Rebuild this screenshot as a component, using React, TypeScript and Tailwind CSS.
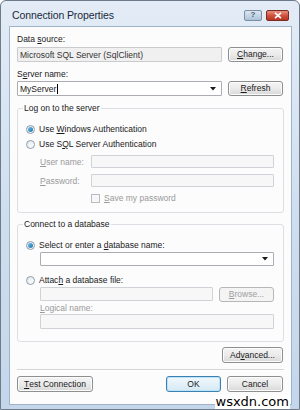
import React from "react";

function U({ children }: { children: React.ReactNode }) {
  return <span className="underline underline-offset-[1px]">{children}</span>;
}

function Btn({
  children,
  className = "",
  focused = false,
  disabled = false,
}: {
  children: React.ReactNode;
  className?: string;
  focused?: boolean;
  disabled?: boolean;
}) {
  const border = focused
    ? "border-[#3c7fb1] shadow-[inset_0_0_0_1px_#b9e4f8] bg-gradient-to-b from-[#f2f8fc] to-[#d6e9f5]"
    : disabled
    ? "border-[#b7b7b7] bg-[#f4f4f4] text-[#a0a0a0]"
    : "border-[#8e8f8f] shadow-[inset_0_0_0_1px_#fcfcfc] bg-gradient-to-b from-[#f4f4f4] via-[#ebebeb] to-[#d8d8d8]";
  return (
    <div
      className={`flex items-center justify-center rounded-[3px] border text-[8.5px] leading-none ${
        disabled ? "" : "text-[#1a1a1a]"
      } ${border} ${className}`}
    >
      {children}
    </div>
  );
}

function Radio({ checked = false }: { checked?: boolean }) {
  return (
    <div className="flex items-center justify-center w-[9px] h-[9px] rounded-full border border-[#8a9cae] bg-gradient-to-br from-[#e2e6ea] to-[#ffffff] shrink-0">
      {checked && (
        <div className="w-[5px] h-[5px] rounded-full bg-gradient-to-br from-[#6bc3ee] to-[#1f6fa6]" />
      )}
    </div>
  );
}

function Field({
  className = "",
  disabled = false,
  children,
}: {
  className?: string;
  disabled?: boolean;
  children?: React.ReactNode;
}) {
  return (
    <div
      className={`flex items-center border rounded-[1px] ${
        disabled ? "border-[#cfd3d7] bg-[#f7f7f7]" : "border-[#abadb3] bg-white"
      } ${className}`}
    >
      {children}
    </div>
  );
}

function Arrow() {
  return (
    <svg width="6" height="4" viewBox="0 0 6 4" className="shrink-0">
      <path d="M0 0 L6 0 L3 3.5 Z" fill="#1a1a1a" />
    </svg>
  );
}

export default function App() {
  return (
    <div className="relative w-[300px] h-[410px] overflow-hidden bg-white font-['Liberation_Sans',Arial,sans-serif]">
      <div className="flex flex-col w-[300px] h-[410px] border border-[#6d7b8b] rounded-t-[6px] bg-gradient-to-b from-[#e3ecf6] via-[#d0dfef] to-[#c4d6ea]">
        {/* Title bar */}
        <div className="flex items-center h-[25px] pl-[11px] pr-[10px] shrink-0">
          <div className="text-[10.5px] text-[#1b2a3a] leading-none tracking-[-0.1px] mt-[4px]">
            Connection Properties
          </div>
          <div className="ml-auto flex items-center gap-[4px] mt-[3px]">
            <div className="flex items-center justify-center w-[18px] h-[11px] rounded-[2px] border border-[#7c8ea3] bg-gradient-to-b from-[#dbe6f1] to-[#aec4da] text-[8px] leading-none text-[#4b5d70] font-bold">
              ?
            </div>
            <div className="flex items-center justify-center w-[23px] h-[11px] rounded-[2px] border border-[#7a2b22] bg-gradient-to-b from-[#e8907f] via-[#d0523e] to-[#b7331f]">
              <svg width="8" height="7" viewBox="0 0 8 7">
                <path d="M1 0.8 L7 6.2 M7 0.8 L1 6.2" stroke="#ffffff" strokeWidth="1.7" />
              </svg>
            </div>
          </div>
        </div>

        {/* Client area */}
        <div className="flex flex-col ml-[8px] mr-[7px] mb-[4px] flex-1 border border-[#9fb4ca] bg-[#fcfcfd] pt-[7px] pl-[7px] pr-[8px] text-[8.5px] leading-[10px] text-[#1a1a1a]">
          {/* Data source */}
          <div className="h-[10px]">
            Data <U>s</U>ource:
          </div>
          <div className="flex mt-[3px] h-[15px] gap-[6px]">
            <Field className="flex-1 px-[2px] !bg-[#f0f0f0] !border-[#c9cbcf]">
              <span className="text-[#333]">Microsoft SQL Server (SqlClient)</span>
            </Field>
            <Btn className="w-[55px]">
              <U>C</U>hange...
            </Btn>
          </div>

          {/* Server name */}
          <div className="h-[10px] mt-[7px]">
            S<U>e</U>rver name:
          </div>
          <div className="flex mt-[2px] h-[15px] gap-[6px]">
            <Field className="flex-1 pl-[2px] pr-[5px]">
              <span>MyServer</span>
              <span className="w-px h-[10px] bg-black ml-px" />
              <span className="ml-auto">
                <Arrow />
              </span>
            </Field>
            <Btn className="w-[55px]">
              <U>R</U>efresh
            </Btn>
          </div>

          {/* Group 1 */}
          <div className="relative mt-[12px] h-[105px] border border-[#dcdfe3] rounded-[3px] mr-[-1px]">
            <div className="absolute left-[5px] top-[-6px] px-[1px] bg-[#fcfcfd]">
              Log on to the server
            </div>
            <div className="flex flex-col pt-[15px] pl-[8px] pr-[9px]">
              <div className="flex items-center gap-[4px] h-[10px]">
                <Radio checked />
                <span>
                  Use <U>W</U>indows Authentication
                </span>
              </div>
              <div className="flex items-center gap-[4px] h-[10px] mt-[5px]">
                <Radio />
                <span>
                  Use S<U>Q</U>L Server Authentication
                </span>
              </div>
              <div className="flex items-center mt-[6px] h-[13px] pl-[14px] text-[#9a9a9a]">
                <span className="w-[51px]">
                  <U>U</U>ser name:
                </span>
                <Field disabled className="flex-1 h-[13px]" />
              </div>
              <div className="flex items-center mt-[6px] h-[13px] pl-[14px] text-[#9a9a9a]">
                <span className="w-[51px]">
                  <U>P</U>assword:
                </span>
                <Field disabled className="flex-1 h-[13px]" />
              </div>
              <div className="flex items-center mt-[6px] h-[10px] pl-[65px] gap-[4px] text-[#9a9a9a]">
                <div className="w-[9px] h-[9px] border border-[#b5bcc4] bg-[#f7f7f7]" />
                <span>
                  <U>S</U>ave my password
                </span>
              </div>
            </div>
          </div>

          {/* Group 2 */}
          <div className="relative mt-[11px] h-[118px] border border-[#dcdfe3] rounded-[3px] mr-[-1px]">
            <div className="absolute left-[5px] top-[-6px] px-[1px] bg-[#fcfcfd]">
              Connect to a database
            </div>
            <div className="flex flex-col pt-[15px] pl-[8px] pr-[9px]">
              <div className="flex items-center gap-[4px] h-[10px]">
                <Radio checked />
                <span>
                  Select or enter a <U>d</U>atabase name:
                </span>
              </div>
              <Field className="mt-[2px] ml-[14px] h-[14px] pr-[5px] justify-end">
                <Arrow />
              </Field>
              <div className="flex items-center gap-[4px] h-[10px] mt-[9px]">
                <Radio />
                <span>
                  Attac<U>h</U> a database file:
                </span>
              </div>
              <div className="flex mt-[2px] ml-[14px] h-[15px] gap-[6px]">
                <Field disabled className="flex-1 h-[14px]" />
                <Btn disabled className="w-[55px] h-[15px]">
                  <U>B</U>rowse...
                </Btn>
              </div>
              <div className="h-[10px] mt-[1px] ml-[14px] text-[#9a9a9a]">
                <U>L</U>ogical name:
              </div>
              <Field disabled className="mt-[1px] ml-[14px] h-[15px]" />
            </div>
          </div>

          {/* Advanced */}
          <div className="flex justify-end mt-[5px]">
            <Btn className="w-[61px] h-[16px]">
              Ad<U>v</U>anced...
            </Btn>
          </div>

          <div className="mt-[6px] h-[2px] border-t border-[#d5d5d5] border-b border-b-white mr-[-1px]" />

          <div className="flex items-center mt-[5px] h-[16px]">
            <Btn className="w-[76px] h-[16px]">
              <U>T</U>est Connection
            </Btn>
            <Btn focused className="ml-auto w-[55px] h-[16px]">
              OK
            </Btn>
            <Btn className="ml-[6px] w-[56px] h-[16px]">Cancel</Btn>
          </div>
        </div>
      </div>

      {/* Watermark */}
      <div className="absolute right-[10px] bottom-[1px] bg-white px-[1px] text-[13px] leading-[14px] text-black font-['DejaVu_Sans',sans-serif]">
        wsxdn.com
      </div>
    </div>
  );
}
